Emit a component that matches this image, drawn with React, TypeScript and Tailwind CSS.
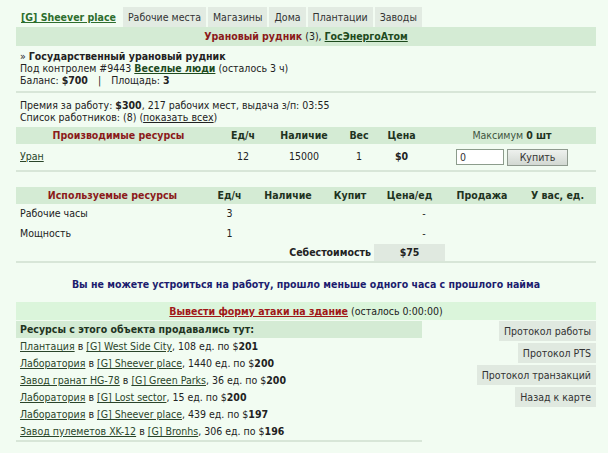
const tabs = ["Рабочие места", "Магазины", "Дома", "Плантации", "Заводы"];

const sales = [
  { obj: "Плантация", city: "[G] West Side City", qty: "108", price: "201" },
  { obj: "Лаборатория", city: "[G] Sheever place", qty: "1440", price: "200" },
  { obj: "Завод гранат HG-78", city: "[G] Green Parks", qty: "36", price: "200" },
  { obj: "Лаборатория", city: "[G] Lost sector", qty: "15", price: "200" },
  { obj: "Лаборатория", city: "[G] Sheever place", qty: "439", price: "197" },
  { obj: "Завод пулеметов XK-12", city: "[G] Bronhs", qty: "306", price: "196" },
];

const protocols = ["Протокол работы", "Протокол PTS", "Протокол транзакций", "Назад к карте"];

export default function App() {
  return (
    <div className="min-h-[453px] bg-[#f2fcf2] pt-[7px] font-['DejaVu_Sans_Condensed','DejaVu_Sans',sans-serif] text-[10.5px] text-[#222]">
      <div className="ml-4 w-[580px]">
        {/* Tabs */}
        <div className="flex h-[20px] gap-[2px]">
          <a href="#" className="px-[5px] font-bold leading-[20px] text-[#2d6e2d] underline">
            [G] Sheever place
          </a>
          {tabs.map((t) => (
            <span key={t} className="bg-[#e2ebe2] px-[5px] leading-[20px] text-[#333]">
              {t}
            </span>
          ))}
        </div>

        {/* Title */}
        <div className="h-[19px] bg-[#d4ebd4] text-center leading-[19px]">
          <b className="text-[#8b1a1a]">Урановый рудник</b> (3),{" "}
          <a href="#" className="font-bold text-[#1d4a1d] underline">
            ГосЭнергоАтом
          </a>
        </div>

        {/* Info */}
        <div className="px-1 pt-[4px] pb-[5px] leading-[12px]">
          <div>
            » <b>Государственный урановый рудник</b>
          </div>
          <div>
            Под контролем #9443{" "}
            <a href="#" className="font-bold text-[#1d4a1d] underline">
              Веселые люди
            </a>{" "}
            (осталось 3 ч)
          </div>
          <div>
            Баланс: <b>$700</b>
            <span className="mx-[10px]">|</span>Площадь: <b>3</b>
          </div>
        </div>
        <div className="h-[2px] bg-[#d8e6d8]" />

        <div className="px-1 pt-[6px] pb-[4px] leading-[12px]">
          <div>
            Премия за работу: <b>$300</b>, 217 рабочих мест, выдача з/п: 03:55
          </div>
          <div>
            Список работников: (8) (
            <a href="#" className="underline">
              показать всех
            </a>
            )
          </div>
        </div>

        {/* Produced resources */}
        <table className="w-full table-fixed border-collapse">
          <colgroup>
            <col className="w-[205px]" />
            <col className="w-[44px]" />
            <col className="w-[78px]" />
            <col className="w-[32px]" />
            <col className="w-[53px]" />
            <col className="w-[168px]" />
          </colgroup>
          <thead>
            <tr className="h-[17px] bg-[#d4ebd4] font-bold text-[#1f331f]">
              <th className="text-[#8b1a1a]">Производимые ресурсы</th>
              <th>Ед/ч</th>
              <th>Наличие</th>
              <th>Вес</th>
              <th>Цена</th>
              <th className="font-normal text-[#3f553f]">
                Максимум <b className="text-[#1f331f]">0 шт</b>
              </th>
            </tr>
          </thead>
          <tbody>
            <tr className="h-[26px] text-center">
              <td className="pl-1 text-left">
                <a href="#" className="text-[#2a452a] underline">
                  Уран
                </a>
              </td>
              <td>12</td>
              <td>15000</td>
              <td>1</td>
              <td className="font-bold">$0</td>
              <td>
                <div className="flex items-center justify-center gap-[3px]">
                  <input
                    defaultValue="0"
                    className="h-[16px] w-[48px] border border-[#8c9c8c] bg-white px-[3px] text-[10.5px] text-[#333] outline-none"
                  />
                  <button className="h-[17px] w-[61px] border border-[#8f9a8f] bg-gradient-to-b from-[#eef1ee] to-[#d2d8d2] text-[10.5px] text-[#333]">
                    Купить
                  </button>
                </div>
              </td>
            </tr>
          </tbody>
        </table>
        <div className="h-[2px] bg-[#d8e6d8]" />

        {/* Used resources */}
        <table className="mt-[15px] w-full table-fixed border-collapse">
          <colgroup>
            <col className="w-[193px]" />
            <col className="w-[41px]" />
            <col className="w-[76px]" />
            <col className="w-[48px]" />
            <col className="w-[71px]" />
            <col className="w-[74px]" />
            <col className="w-[77px]" />
          </colgroup>
          <thead>
            <tr className="h-[17px] bg-[#d4ebd4] font-bold text-[#1f331f]">
              <th className="text-[#8b1a1a]">Используемые ресурсы</th>
              <th>Ед/ч</th>
              <th>Наличие</th>
              <th>Купит</th>
              <th>Цена/ед</th>
              <th>Продажа</th>
              <th>У вас, ед.</th>
            </tr>
          </thead>
          <tbody className="text-center">
            <tr className="h-[20px]">
              <td className="pl-1 text-left">Рабочие часы</td>
              <td>3</td>
              <td />
              <td />
              <td className="pl-[29px]">-</td>
              <td />
              <td />
            </tr>
            <tr className="h-[20px]">
              <td className="pl-1 text-left">Мощность</td>
              <td>1</td>
              <td />
              <td />
              <td className="pl-[29px]">-</td>
              <td />
              <td />
            </tr>
            <tr className="h-[17px]">
              <td />
              <td />
              <td colSpan={2} className="pr-[3px] text-right font-bold">
                Себестоимость
              </td>
              <td className="bg-[#e0e9e0] font-bold">$75</td>
              <td />
              <td />
            </tr>
          </tbody>
        </table>
        <div className="h-[2px] bg-[#d8e6d8]" />

        {/* Message */}
        <div className="pt-[14px] pb-[11px] text-center font-bold leading-[14px] text-[#1c1c6e]">
          Вы не можете устроиться на работу, прошло меньше одного часа с прошлого найма
        </div>

        {/* Attack */}
        <div className="h-[18px] bg-[#dbf5db] text-center leading-[18px]">
          <a href="#" className="font-bold text-[#a01818] underline">
            Вывести форму атаки на здание
          </a>{" "}
          (осталось 0:00:00)
        </div>

        {/* Sales + protocols */}
        <div className="mt-[1px] flex items-start justify-between">
          <div className="w-[406px]">
            <div className="h-[17px] bg-[#d4ebd4] pl-1 font-bold leading-[17px] text-[#1f331f]">
              Ресурсы с этого объекта продавались тут:
            </div>
            {sales.map((s, i) => (
              <div key={i} className="h-[17px] pl-1 leading-[17px]">
                <a href="#" className="text-[#2a452a] underline">
                  {s.obj}
                </a>{" "}
                в{" "}
                <a href="#" className="text-[#2a452a] underline">
                  {s.city}
                </a>
                , {s.qty} ед. по $<b>{s.price}</b>
              </div>
            ))}
            <div className="h-[2px] bg-[#d8e6d8]" />
          </div>
          <div className="flex flex-col items-end gap-[2px]">
            {protocols.map((p) => (
              <span key={p} className="h-[20px] bg-[#e0e9e0] px-[5px] leading-[20px] text-[#333]">
                {p}
              </span>
            ))}
          </div>
        </div>
      </div>
    </div>
  );
}
